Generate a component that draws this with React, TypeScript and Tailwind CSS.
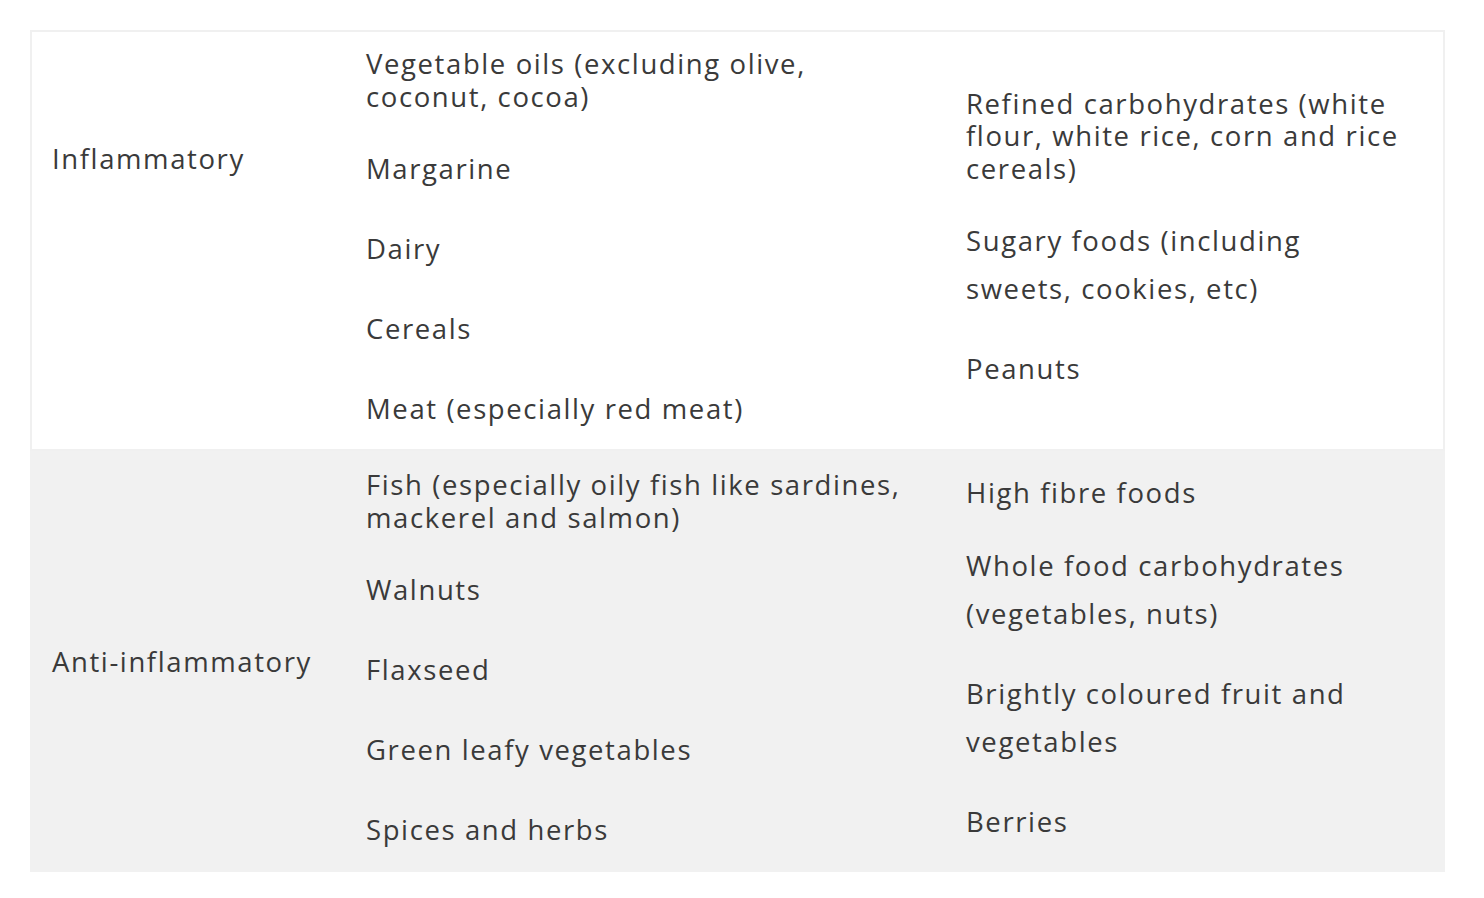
const rows = [
  {
    label: "Inflammatory",
    shade: false,
    left: [
      { lines: ["Vegetable oils (excluding olive,", "coconut, cocoa)"], tight: true },
      { lines: ["Margarine"] },
      { lines: ["Dairy"] },
      { lines: ["Cereals"] },
      { lines: ["Meat (especially red meat)"] },
    ],
    right: [
      { lines: ["Refined carbohydrates (white", "flour, white rice, corn and rice", "cereals)"], tight: true },
      { lines: ["Sugary foods (including", "sweets, cookies, etc)"] },
      { lines: ["Peanuts"] },
    ],
  },
  {
    label: "Anti-inflammatory",
    shade: true,
    left: [
      { lines: ["Fish (especially oily fish like sardines,", "mackerel and salmon)"], tight: true },
      { lines: ["Walnuts"] },
      { lines: ["Flaxseed"] },
      { lines: ["Green leafy vegetables"] },
      { lines: ["Spices and herbs"] },
    ],
    right: [
      { lines: ["High fibre foods"], tight: true },
      { lines: ["Whole food carbohydrates", "(vegetables, nuts)"] },
      { lines: ["Brightly coloured fruit and", "vegetables"] },
      { lines: ["Berries"] },
    ],
  },
];

type Item = { lines: string[]; tight?: boolean };

function Cell({ items }: { items: Item[] }) {
  return (
    <div className="flex flex-col justify-center gap-8 px-[22px]">
      {items.map((item, i) => (
        <p key={i} className={item.tight ? "leading-[32.5px]" : "leading-[48px]"}>
          {item.lines.map((line, j) => (
            <span key={j} className="block whitespace-nowrap">
              {line}
            </span>
          ))}
        </p>
      ))}
    </div>
  );
}

export default function App() {
  return (
    <div className="min-h-[898px] w-full bg-white pt-[30px] pl-[30px] font-['Open_Sans',sans-serif] text-[27.5px] tracking-[1.6px] text-[#3a3a3a]">
      <div className="w-[1415px]">
        {rows.map((row) => (
          <div
            key={row.label}
            className={
              row.shade
                ? "grid h-[421px] grid-cols-[314px_600px_1fr] bg-[#f1f1f1]"
                : "grid h-[421px] grid-cols-[314px_600px_1fr] bg-white shadow-[inset_0_0_0_2px_#f0f0f0]"
            }
          >
            <div
              className={
                row.shade
                  ? "flex items-center px-[22px] leading-[32px]"
                  : "px-[22px] pt-[113px] leading-[32px]"
              }
            >
              {row.label}
            </div>
            <Cell items={row.left} />
            <Cell items={row.right} />
          </div>
        ))}
      </div>
    </div>
  );
}
